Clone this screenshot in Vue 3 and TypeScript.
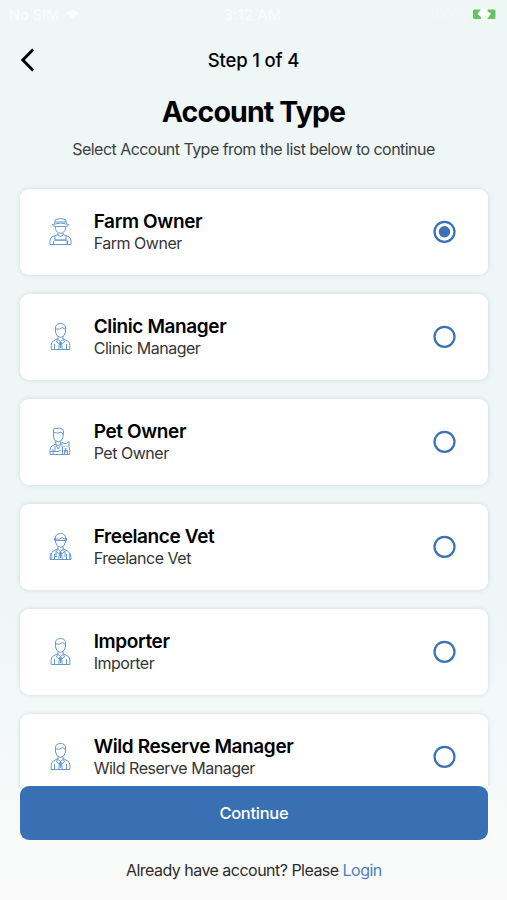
<script setup lang="ts">
import { ref } from 'vue'

type IconKind = 'farmer' | 'manager' | 'pet' | 'vet'

interface AccountType {
  name: string
  icon: IconKind
}

const accountTypes: AccountType[] = [
  { name: 'Farm Owner', icon: 'farmer' },
  { name: 'Clinic Manager', icon: 'manager' },
  { name: 'Pet Owner', icon: 'pet' },
  { name: 'Freelance Vet', icon: 'vet' },
  { name: 'Importer', icon: 'manager' },
  { name: 'Wild Reserve Manager', icon: 'manager' },
]

const selected = ref('Farm Owner')
</script>

<template>
  <main class="screen">
    <div class="status">
      <div class="carrier">
        <span>No SIM</span>
        <svg class="wifi" viewBox="0 0 14 10"><path d="M0 3Q7-3 14 3L7 10Z" /></svg>
      </div>
      <span class="clock">3:12 AM</span>
      <div class="power">
        <span class="percent">100%</span>
        <svg class="battery" viewBox="0 0 23 11">
          <rect x="0" y="0.5" width="22.5" height="9.5" rx="1.5" fill="#65c466" />
          <path d="M9-1 4.5 5 8 8V11H13.5L18 4.5 14.5 2.5V-1Z" fill="#fff" />
        </svg>
      </div>
    </div>

    <header class="nav">
      <button class="back" aria-label="Back">
        <svg viewBox="0 0 16 24"><path d="M13.2 1.5 2.8 12l10.4 10.5" /></svg>
      </button>
      <span class="step">Step 1 of 4</span>
    </header>

    <h1>Account Type</h1>
    <p class="lead">Select Account Type from the list below to continue</p>

    <div class="list" role="radiogroup">
      <div
        v-for="type in accountTypes"
        :key="type.name"
        class="card"
        role="radio"
        :aria-checked="selected === type.name"
        @click="selected = type.name"
      >
        <svg class="person" viewBox="0 0 32 38">
          <template v-if="type.icon === 'farmer'">
            <path d="M9.5 10.5 10.5 6.5Q15.5 4.5 20.5 6.5L21.5 10.5M10 9H21M7.3 11.5Q15.5 8.5 23.7 11.5Q23 13.5 20.5 13.5H10.5Q8 13.5 7.3 11.5Z" />
            <path d="M10.5 13.5V15.5Q11.3 20 15.5 20.3Q19.7 20 20.5 15.5V13.5M13 20V22.5Q15.5 24.5 18 22.5V20" />
            <path d="M13 21.5 7.5 23.5Q5 24.5 5 28V31.5H26V28Q26 24.5 23.5 23.5L18 21.5M8.5 31V28M22.5 31V28M10 23V27H21V23M9 27.2H22V31" />
          </template>
          <template v-else-if="type.icon === 'pet'">
            <path d="M8.5 12V7Q8.5 5 10.5 5.5Q15 4 18 6.5Q19 8 18 12M8.5 9.5Q13 11 16 9L18 11M8.5 11V14Q9 18.5 13.2 19Q17.5 18.5 18 14V11M10.8 18V21.5Q13 23.5 15.5 21.5V18.5" />
            <path d="M10.8 21 7 23Q5 24 5 27.5V31.5H24.5M10.8 21.5 13 26 15.5 22.5M8 31V26M5 28.5H13L16 27M10 23V28.5" />
            <path d="M17.5 31V25Q16.5 23 17 19L19 20.5H21.5L24 18.5V24Q25.5 27 24.5 31.5M19.2 23V24M22 23V24M20 25.5H21.5M19.5 31V28M22.5 31V28M20.8 26V29.5M18.5 27.5H23" />
          </template>
          <template v-else>
            <path d="M10.5 12V10Q10.5 5.5 15.5 5.5Q20.5 5.5 20.5 10V14Q20 18.5 15.5 19.5Q11 18.5 10.5 14V11Q15 12 17.5 9.5L20.5 11.5M13 18.5V21.5L15.5 23.5 18 21.5V18.5" />
            <path d="M13 20.5 8.5 23Q6.3 24 6.2 27V31.5H24.8V27Q24.7 24 22.5 23L18 20.5M9.5 31.5V26M21.5 31.5V26M12.5 21.5 11.5 24 14.5 26 15.5 23.5 16.5 26 19.5 24 18.5 21.5M14.5 24.5 13.8 31.5M16.5 24.5 17.2 31.5M15.5 24V30" />
            <path v-if="type.icon === 'vet'" d="M9.5 10V12.5H21.5V10M6.2 25Q5 27 5 31.5H26Q26 27 24.8 25M11 23V28M20 23V27M18.5 28H21.5M10 28.5H12" />
          </template>
        </svg>
        <div class="labels">
          <div class="name">{{ type.name }}</div>
          <div class="detail">{{ type.name }}</div>
        </div>
        <svg class="radio" viewBox="0 0 23 23">
          <circle class="ring" cx="11.5" cy="11.8" r="10" />
          <circle v-if="selected === type.name" class="dot" cx="11.5" cy="11.8" r="5.7" />
        </svg>
      </div>
    </div>

    <footer class="footer">
      <button class="continue">Continue</button>
      <p class="login">Already have account? Please <a>Login</a></p>
    </footer>
  </main>
</template>

<style>
body {
  margin: 0;
  overflow: hidden;
}
</style>

<style scoped>
.screen {
  display: flex;
  flex-direction: column;
  box-sizing: border-box;
  width: 100%;
  height: 900px;
  overflow: hidden;
  background: linear-gradient(#eef6f6 0, #eef6f6 580px, #f9fafa 850px, #fafafa 900px);
  font-family: Inter, "Liberation Sans", sans-serif;
  color: #000;
}
.status {
  display: grid;
  grid-template-columns: 1fr auto 1fr;
  align-items: center;
  height: 28px;
  padding: 0 11px 0 9px;
  color: #f8fcfb;
  font-size: 14.5px;
  font-weight: 500;
}
.carrier,
.power {
  display: flex;
  align-items: center;
  gap: 7px;
}
.power {
  justify-content: flex-end;
  gap: 5px;
}
.clock {
  letter-spacing: 0.3px;
}
.percent {
  color: #f3f9f8;
}
.wifi {
  width: 13px;
  height: 9px;
  fill: #fbfefd;
}
.battery {
  width: 23px;
  height: 11px;
}
.nav {
  display: grid;
  grid-template-columns: 60px 1fr 60px;
  align-items: center;
  height: 64px;
}
button {
  border: 0;
  font: inherit;
}
.back {
  display: flex;
  padding: 0 0 0 20px;
  background: none;
}
.back svg {
  width: 16px;
  height: 24px;
  fill: none;
  stroke: #000;
  stroke-width: 2.9;
}
.step {
  text-align: center;
  font-size: 18.5px;
  font-weight: 500;
  letter-spacing: -0.15px;
}
h1 {
  margin: 0;
  text-align: center;
  font-size: 28.5px;
  line-height: 40px;
  font-weight: 650;
  letter-spacing: -0.85px;
}
.lead {
  margin: 6px 0 0;
  text-align: center;
  font-size: 16px;
  line-height: 22px;
  letter-spacing: -0.54px;
  color: #3c4040;
}
.list {
  display: flex;
  flex: none;
  flex-direction: column;
  gap: 19.5px;
  height: 626px;
  box-sizing: border-box;
  padding: 29px 19.5px 0 20.2px;
  overflow: hidden;
}
.card {
  display: flex;
  flex: none;
  align-items: center;
  box-sizing: border-box;
  height: 85.5px;
  padding: 0 32px 0 24.8px;
  border-radius: 9px;
  background: #fff;
  box-shadow: 0 0 5px rgba(40, 50, 50, 0.14);
}
.person {
  width: 32px;
  height: 38px;
  fill: none;
  stroke: #6699d3;
  stroke-width: 1;
  stroke-linejoin: round;
}
.labels {
  flex: 1;
  padding: 2px 0 0 16.7px;
  white-space: nowrap;
}
.name {
  font-size: 19px;
  line-height: 22px;
  font-weight: 600;
  letter-spacing: -0.38px;
}
.detail {
  font-size: 16px;
  line-height: 21px;
  letter-spacing: -0.48px;
  color: #353535;
}
.radio {
  width: 23px;
  height: 23px;
}
.ring {
  fill: none;
  stroke: #3972b5;
  stroke-width: 2.2;
}
.dot {
  fill: #3972b5;
}
.footer {
  flex: none;
  padding: 0 19.5px 0 20.2px;
  height: 114px;
  box-sizing: border-box;
}
.continue {
  display: block;
  width: 100%;
  height: 54px;
  border-radius: 9px;
  background: #3870b3;
  color: #fff;
  font-size: 16.5px;
  font-weight: 500;
  letter-spacing: -0.3px;
}
.login {
  margin: 19px 0 0;
  text-align: center;
  font-size: 16px;
  line-height: 22px;
  letter-spacing: -0.52px;
  color: #2c2c2c;
}
.login a {
  color: #4a7fc1;
}
</style>
